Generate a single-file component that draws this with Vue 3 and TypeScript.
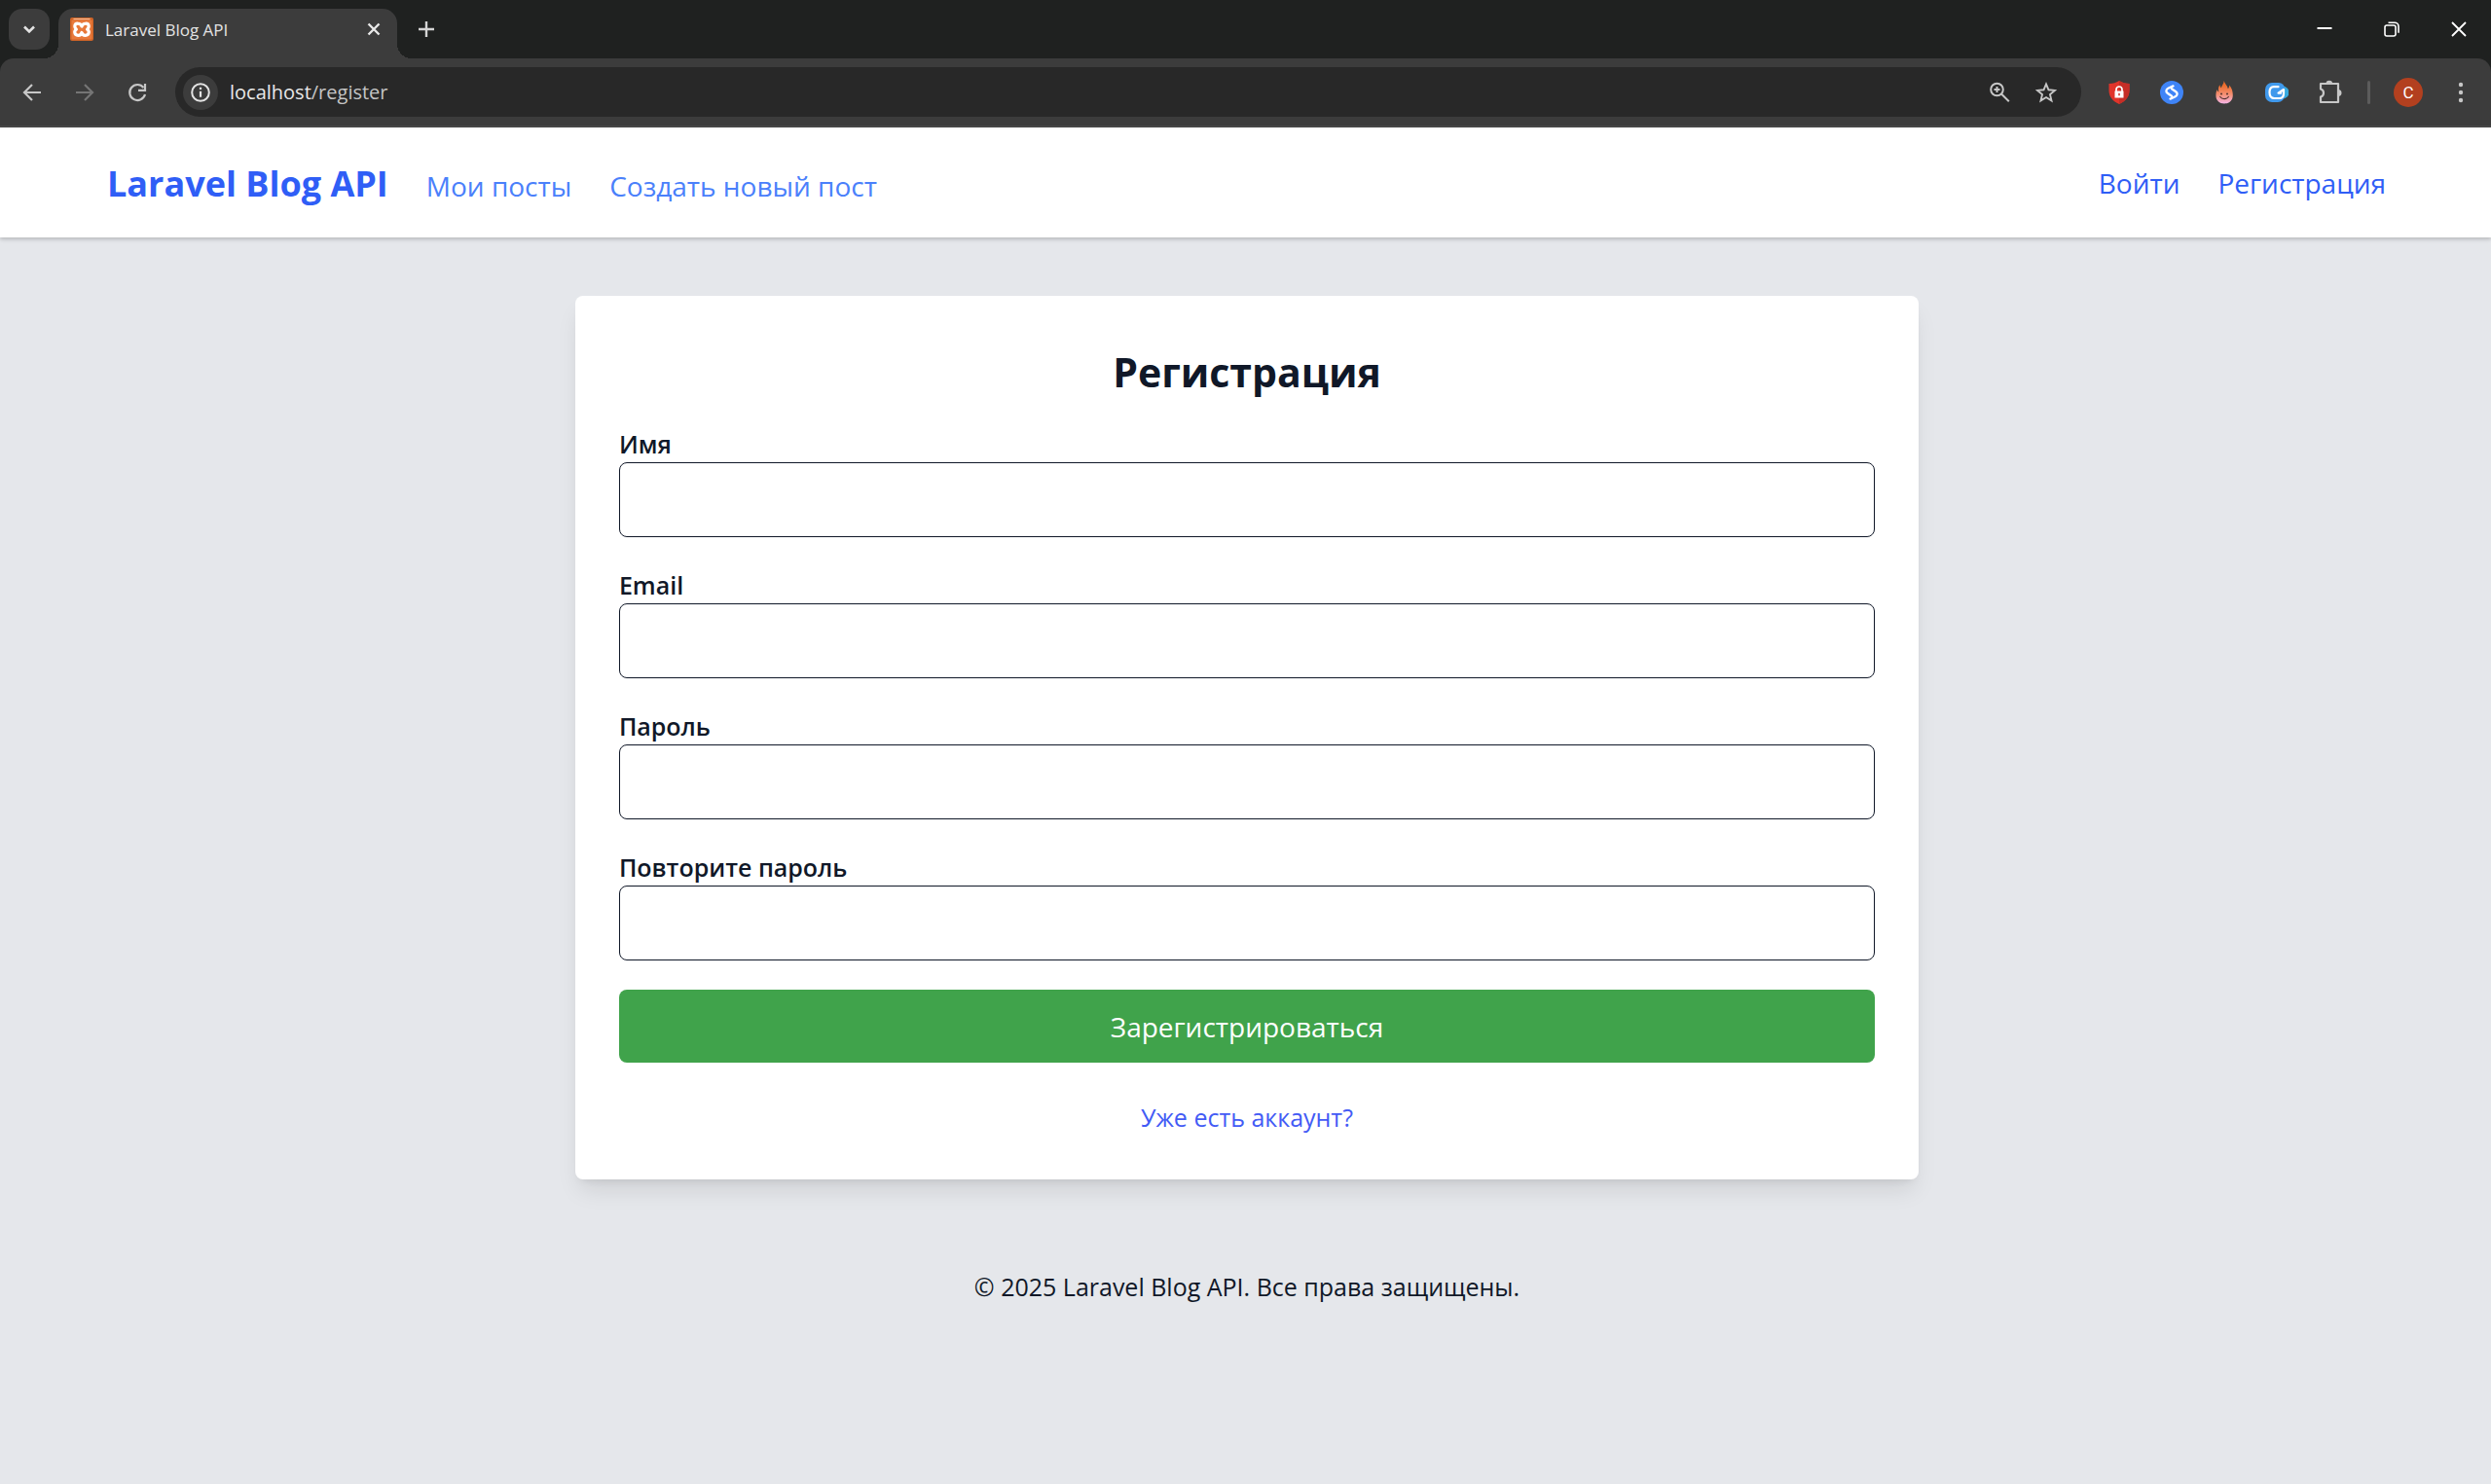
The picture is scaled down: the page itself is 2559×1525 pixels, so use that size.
<script setup lang="ts">
import { reactive } from 'vue'

type FieldKey = 'name' | 'email' | 'password' | 'confirm'

const fields: { key: FieldKey; label: string; type: string }[] = [
  { key: 'name', label: 'Имя', type: 'text' },
  { key: 'email', label: 'Email', type: 'email' },
  { key: 'password', label: 'Пароль', type: 'password' },
  { key: 'confirm', label: 'Повторите пароль', type: 'password' },
]

const form = reactive<Record<FieldKey, string>>({ name: '', email: '', password: '', confirm: '' })
</script>

<template>
  <div class="window">
    <div class="tabstrip">
      <button class="tab-search" type="button" aria-label="Search tabs">
        <svg width="42" height="42" viewBox="0 0 42 42"><path d="M16 18.500l5 5 5-5" fill="none" stroke="#e3e3e3" stroke-width="2.600" /></svg>
      </button>
      <div class="tab">
        <svg class="favicon" width="24" height="24" viewBox="0 0 24 24">
          <rect width="24" height="24" rx="2" fill="#cf6427" />
          <rect x="1.500" y="2.500" width="21" height="20" rx="1" fill="#e8793a" />
          <path d="M3.500 1.600h17" stroke="#f6c7a6" stroke-width="1" />
          <path d="M12 9C11 5.400 5 5.200 4.800 9c0 1.500.8 2.400 1.600 3.200C5 13.200 4.600 14.500 4.800 15.500c.5 3.500 6.200 4 7.200 0 1 4 6.700 3.500 7.200 0 .2-1-.2-2.300-1.600-3.300.8-.8 1.600-1.700 1.600-3.200C19 5.200 13 5.400 12 9z" fill="none" stroke="#fff" stroke-width="3.200" stroke-linejoin="round" />
        </svg>
        <span class="tab-title">Laravel Blog API</span>
        <button class="plain" type="button" aria-label="Close tab">
          <svg width="24" height="24" viewBox="0 0 24 24"><path d="M6.500 6.500l11 11m0-11l-11 11" stroke="#e8e8e8" stroke-width="2.400" /></svg>
        </button>
      </div>
      <button class="plain new-tab" type="button" aria-label="New tab">
        <svg width="24" height="24" viewBox="0 0 24 24"><path d="M12 4v16M4 12h16" stroke="#d4d4d4" stroke-width="2.400" /></svg>
      </button>
      <div class="caption-buttons">
        <button class="plain" type="button" aria-label="Minimize">
          <svg width="24" height="24" viewBox="0 0 24 24"><path d="M4.500 11h15" stroke="#fff" stroke-width="2" /></svg>
        </button>
        <button class="plain" type="button" aria-label="Restore">
          <svg width="24" height="24" viewBox="0 0 24 24" fill="none" stroke="#fff" stroke-width="1.600"><rect x="5" y="8" width="11" height="11" rx="2" /><path d="M8.500 5.200H15a4 4 0 0 1 4 4v6.500" /></svg>
        </button>
        <button class="plain" type="button" aria-label="Close">
          <svg width="24" height="24" viewBox="0 0 24 24"><path d="M5 5l14 14M19 5L5 19" stroke="#fff" stroke-width="1.800" /></svg>
        </button>
      </div>
    </div>

    <div class="toolbar">
      <div class="nav-buttons">
        <button class="plain" type="button" aria-label="Back">
          <svg width="24" height="24" viewBox="0 0 24 24"><path d="M21 12H4.500M12 4l-8 8 8 8" fill="none" stroke="#c7c7c7" stroke-width="2.200" /></svg>
        </button>
        <button class="plain" type="button" aria-label="Forward" disabled>
          <svg width="24" height="24" viewBox="0 0 24 24"><path d="M3 12h16.500M12 4l8 8-8 8" fill="none" stroke="#757575" stroke-width="2.200" /></svg>
        </button>
        <button class="plain" type="button" aria-label="Reload">
          <svg width="24" height="24" viewBox="0 0 24 24"><path d="M18.500 7A8 8 0 1 0 20 14" fill="none" stroke="#c7c7c7" stroke-width="2.200" /><path d="M20 3v6.900h-7" fill="none" stroke="#c7c7c7" stroke-width="2.200" /></svg>
        </button>
      </div>
      <div class="omnibox">
        <button class="site-info" type="button" aria-label="View site information">
          <svg width="36" height="36" viewBox="0 0 36 36"><circle cx="18" cy="18" r="8.800" fill="none" stroke="#e3e3e3" stroke-width="2" /><path d="M18 16.800v6M18 12.800v2.200" stroke="#e3e3e3" stroke-width="2.200" /></svg>
        </button>
        <div class="url">localhost<span>/register</span></div>
        <button class="plain" type="button" aria-label="Zoom">
          <svg width="24" height="24" viewBox="0 0 24 24" fill="none" stroke="#c7c7c7" stroke-width="2"><circle cx="9.500" cy="9" r="6.300" /><path d="M14 13.500l7.800 7.800M9.500 6v6M6.500 9h6" /></svg>
        </button>
        <button class="plain" type="button" aria-label="Bookmark this tab">
          <svg width="24" height="24" viewBox="0 0 24 24"><path d="M12 3.400l2.500 5.900 6.400.6-4.900 4.200 1.500 6.300-5.500-3.400-5.500 3.400 1.500-6.300-4.900-4.200 6.400-.6z" fill="none" stroke="#c7c7c7" stroke-width="1.900" /></svg>
        </button>
      </div>
      <div class="extensions">
        <button class="plain" type="button" aria-label="Ad blocker">
          <svg width="24" height="24" viewBox="0 0 24 24"><path d="M12 0c3 2 6.500 2.800 10.500 3v7c0 6.500-4 11-10.500 14C5.500 21 1.500 16.500 1.500 10V3C5.500 2.800 9 2 12 0z" fill="#e0342a" /><path d="M12 0c3 2 6.500 2.800 10.500 3v7c0 6.500-4 11-10.500 14z" fill="#c52e27" /><rect x="7.500" y="10.500" width="9" height="7" fill="#fff" /><path d="M9 11V9a3 3 0 0 1 6 0v2" fill="none" stroke="#fff" stroke-width="1.700" /><path d="M12 12.700v2.500" stroke="#d3352b" stroke-width="1.500" /></svg>
        </button>
        <button class="plain" type="button" aria-label="Shazam">
          <svg width="24" height="24" viewBox="0 0 24 24"><circle cx="12" cy="12" r="12" fill="#3f84f7" /><path d="M13.500 5.400L8.300 7.800c-2.500 1.200-2.400 3.600-.6 4.900l4.300 3M10.500 18.600l5.200-2.400c2.500-1.200 2.400-3.600.6-4.900l-4.300-3" fill="none" stroke="#fff" stroke-width="2.300" stroke-linecap="round" /></svg>
        </button>
        <button class="plain" type="button" aria-label="Flame">
          <svg width="24" height="24" viewBox="0 0 24 24">
            <defs><linearGradient id="flame" x1="0" y1="0" x2="0" y2="1"><stop offset="0.200" stop-color="#ec6c2c" /><stop offset="0.600" stop-color="#f59073" /><stop offset="1" stop-color="#f4b4e6" /></linearGradient></defs>
            <path d="M11.800 0c.3 3.200 3.600 4.500 4 8.300 1-.9 1.300-2 1.400-3.800 2.800 3.300 3.600 6.600 3.600 10.500 0 5.500-4 8.500-8.800 8.500s-8.600-3-8.600-8.500c0-2.500.4-4 1.200-6 .4 1.500.8 2 1.600 2.500C5.800 8 6 6 7.600 4.200c.2 1.800.6 2.500 1.300 3C9.300 4.500 11.500 3.500 11.800 0z" fill="url(#flame)" />
            <circle cx="9" cy="13.500" r="1" fill="#4f302c" /><circle cx="15" cy="13.500" r="1" fill="#4f302c" /><path d="M7.800 16.500c2 2.800 6.500 2.800 8.500 0" fill="none" stroke="#4f302c" stroke-width="1.200" stroke-linecap="round" />
          </svg>
        </button>
        <button class="plain" type="button" aria-label="Gosling">
          <svg width="24" height="24" viewBox="0 0 24 24"><circle cx="18" cy="12" r="6.500" fill="#36a9df" /><path d="M7 2h7a6 6 0 0 1 6 6v7a7 7 0 0 1-7 7H7a7 7 0 0 1-7-7V9a7 7 0 0 1 7-7z" fill="#4099ec" /><path d="M13.500 6.200H9C5.500 6.200 4.500 8.500 4.500 12s1.500 6 5 6h5c3 0 4.500-2 4.500-5V9l-5.500 3.700H16" fill="none" stroke="#fff" stroke-width="2.200" stroke-linecap="round" stroke-linejoin="round" /></svg>
        </button>
        <button class="plain" type="button" aria-label="Extensions">
          <svg width="26" height="26" viewBox="0 0 26 26"><path d="M3 4h18v19H3v-5.500c4-1 4-7 0-8z" fill="none" stroke="#c7c7c7" stroke-width="2.200" stroke-linejoin="round" /><path d="M8.500 4a3.300 3.300 0 0 1 6.600 0zM21 10a3.300 3.300 0 0 1 0 7z" fill="#c7c7c7" /></svg>
        </button>
      </div>
      <div class="divider"></div>
      <button class="avatar" type="button">C</button>
      <button class="plain" type="button" aria-label="Menu">
        <svg width="24" height="24" viewBox="0 0 24 24" fill="#c7c7c7"><circle cx="12" cy="4" r="2.200" /><circle cx="12" cy="12" r="2.200" /><circle cx="12" cy="20" r="2.200" /></svg>
      </button>
    </div>

    <div class="page">
      <header class="site-header">
        <nav class="links main-links">
          <a class="brand" href="#">Laravel Blog API</a>
          <a class="soft" href="#">Мои посты</a>
          <a class="soft" href="#">Создать новый пост</a>
        </nav>
        <nav class="links">
          <a href="#">Войти</a>
          <a href="#">Регистрация</a>
        </nav>
      </header>
      <main>
        <form class="card" @submit.prevent>
          <h1>Регистрация</h1>
          <div v-for="f in fields" :key="f.key" class="field">
            <label :for="f.key">{{ f.label }}</label>
            <input :id="f.key" v-model="form[f.key]" :type="f.type" />
          </div>
          <button class="submit" type="submit">Зарегистрироваться</button>
          <a class="have-account" href="#">Уже есть аккаунт?</a>
        </form>
      </main>
      <footer>© 2025 Laravel Blog API. Все права защищены.</footer>
    </div>
  </div>
</template>

<style>
body {
  margin: 0;
  background: #e5e7eb;
}
</style>

<style scoped>
* {
  box-sizing: border-box;
}
.window {
  min-height: 100vh;
  display: flex;
  flex-direction: column;
  background: #1f2120;
  font-family: "Open Sans", "Noto Sans", sans-serif;
  color: #101828;
}
svg {
  display: block;
}
a {
  text-decoration: none;
}
button {
  border: 0;
  padding: 0;
  font-family: inherit;
}
.plain {
  background: none;
}
.tabstrip {
  display: flex;
  align-items: center;
  height: 60px;
  padding: 0 21px 0 9px;
}
.tab-search {
  width: 42px;
  height: 42px;
  border-radius: 14px;
  background: #3c3c3c;
}
.tab {
  position: relative;
  align-self: flex-end;
  display: flex;
  align-items: center;
  width: 348px;
  height: 51px;
  margin-left: 9px;
  padding: 0 12px 9px;
  border-radius: 15px 15px 0 0;
  background: #3c3c3c;
}
.tab::before,
.tab::after {
  content: "";
  position: absolute;
  bottom: 0;
  width: 15px;
  height: 15px;
}
.tab::before {
  right: 100%;
  background: radial-gradient(circle at 0 0, transparent 15px, #3c3c3c 15px);
}
.tab::after {
  left: 100%;
  background: radial-gradient(circle at 100% 0, transparent 15px, #3c3c3c 15px);
}
.tab-title {
  flex: 1;
  margin-left: 12px;
  padding-top: 2px;
  font-size: 17px;
  line-height: 24px;
  color: #e3e3e3;
}
.new-tab {
  margin-left: 18px;
}
.caption-buttons {
  display: flex;
  gap: 45px;
  margin-left: auto;
}
.toolbar {
  display: flex;
  align-items: center;
  height: 71px;
  padding: 0 19px 0 21px;
  border-bottom: 2px solid #484848;
  border-radius: 14px 14px 0 0;
  background: #3c3c3c;
}
.nav-buttons {
  display: flex;
  gap: 30px;
}
.omnibox {
  flex: 1;
  display: flex;
  align-items: center;
  gap: 24px;
  height: 51px;
  margin-left: 27px;
  padding: 0 24px 0 8px;
  border-radius: 26px;
  background: #282828;
}
.site-info {
  width: 36px;
  height: 36px;
  border-radius: 50%;
  background: #3c3c3c;
}
.url {
  flex: 1;
  margin-left: -12px;
  font-size: 20px;
  line-height: 30px;
  color: #e8e8e8;
}
.url span {
  color: #c4c4c4;
}
.extensions {
  display: flex;
  align-items: center;
  gap: 30px;
  margin-left: 27px;
}
.divider {
  width: 3px;
  height: 24px;
  margin: 0 24px 0 25px;
  border-radius: 2px;
  background: #5c5c5c;
}
.avatar {
  width: 30px;
  height: 30px;
  margin-right: 27px;
  border-radius: 50%;
  background: #b3401f;
  color: #fff;
  font-family: Roboto, sans-serif;
  font-size: 17px;
}
.page {
  flex: 1;
  background: #e5e7eb;
}
.site-header {
  display: flex;
  justify-content: space-between;
  align-items: center;
  height: 113px;
  padding: 0 108px 0 110px;
  background: #fff;
  box-shadow: 0 2px 5px rgba(0, 0, 0, 0.1), 0 2px 3px rgba(0, 0, 0, 0.1);
}
.links {
  display: flex;
  align-items: baseline;
  gap: 39px;
  font-size: 28px;
  line-height: 42px;
}
.main-links {
  padding-top: 4px;
}
.links a {
  color: #2f5ef6;
}
.links .brand {
  font-size: 36px;
  font-weight: 700;
}
.links .soft {
  color: #4a80fb;
}
main {
  padding: 60px 0 0 3px;
}
.card {
  display: flex;
  flex-direction: column;
  width: 54%;
  margin: 0 auto;
  padding: 45px;
  border-radius: 8px;
  background: #fff;
  box-shadow: 0 15px 24px -5px rgba(0, 0, 0, 0.1), 0 6px 10px -6px rgba(0, 0, 0, 0.1);
}
h1 {
  margin: 0 0 22px;
  font-size: 41px;
  line-height: 66px;
  font-weight: 700;
  text-align: center;
}
.field {
  display: flex;
  flex-direction: column;
  margin-bottom: 30px;
}
label {
  font-size: 25px;
  line-height: 38px;
  font-weight: 600;
}
input {
  height: 77px;
  padding: 0 15px;
  border: 1px solid #101828;
  border-radius: 8px;
  background: #fff;
  font: inherit;
  font-size: 28px;
}
.submit {
  height: 75px;
  border-radius: 8px;
  background: #40a34b;
  color: #fff;
  font-size: 28px;
}
.have-account {
  align-self: center;
  margin-top: 37px;
  font-size: 25px;
  line-height: 38px;
  color: #435bf5;
}
footer {
  padding: 91px 0 0 3px;
  font-size: 25px;
  line-height: 38px;
  text-align: center;
}
</style>
